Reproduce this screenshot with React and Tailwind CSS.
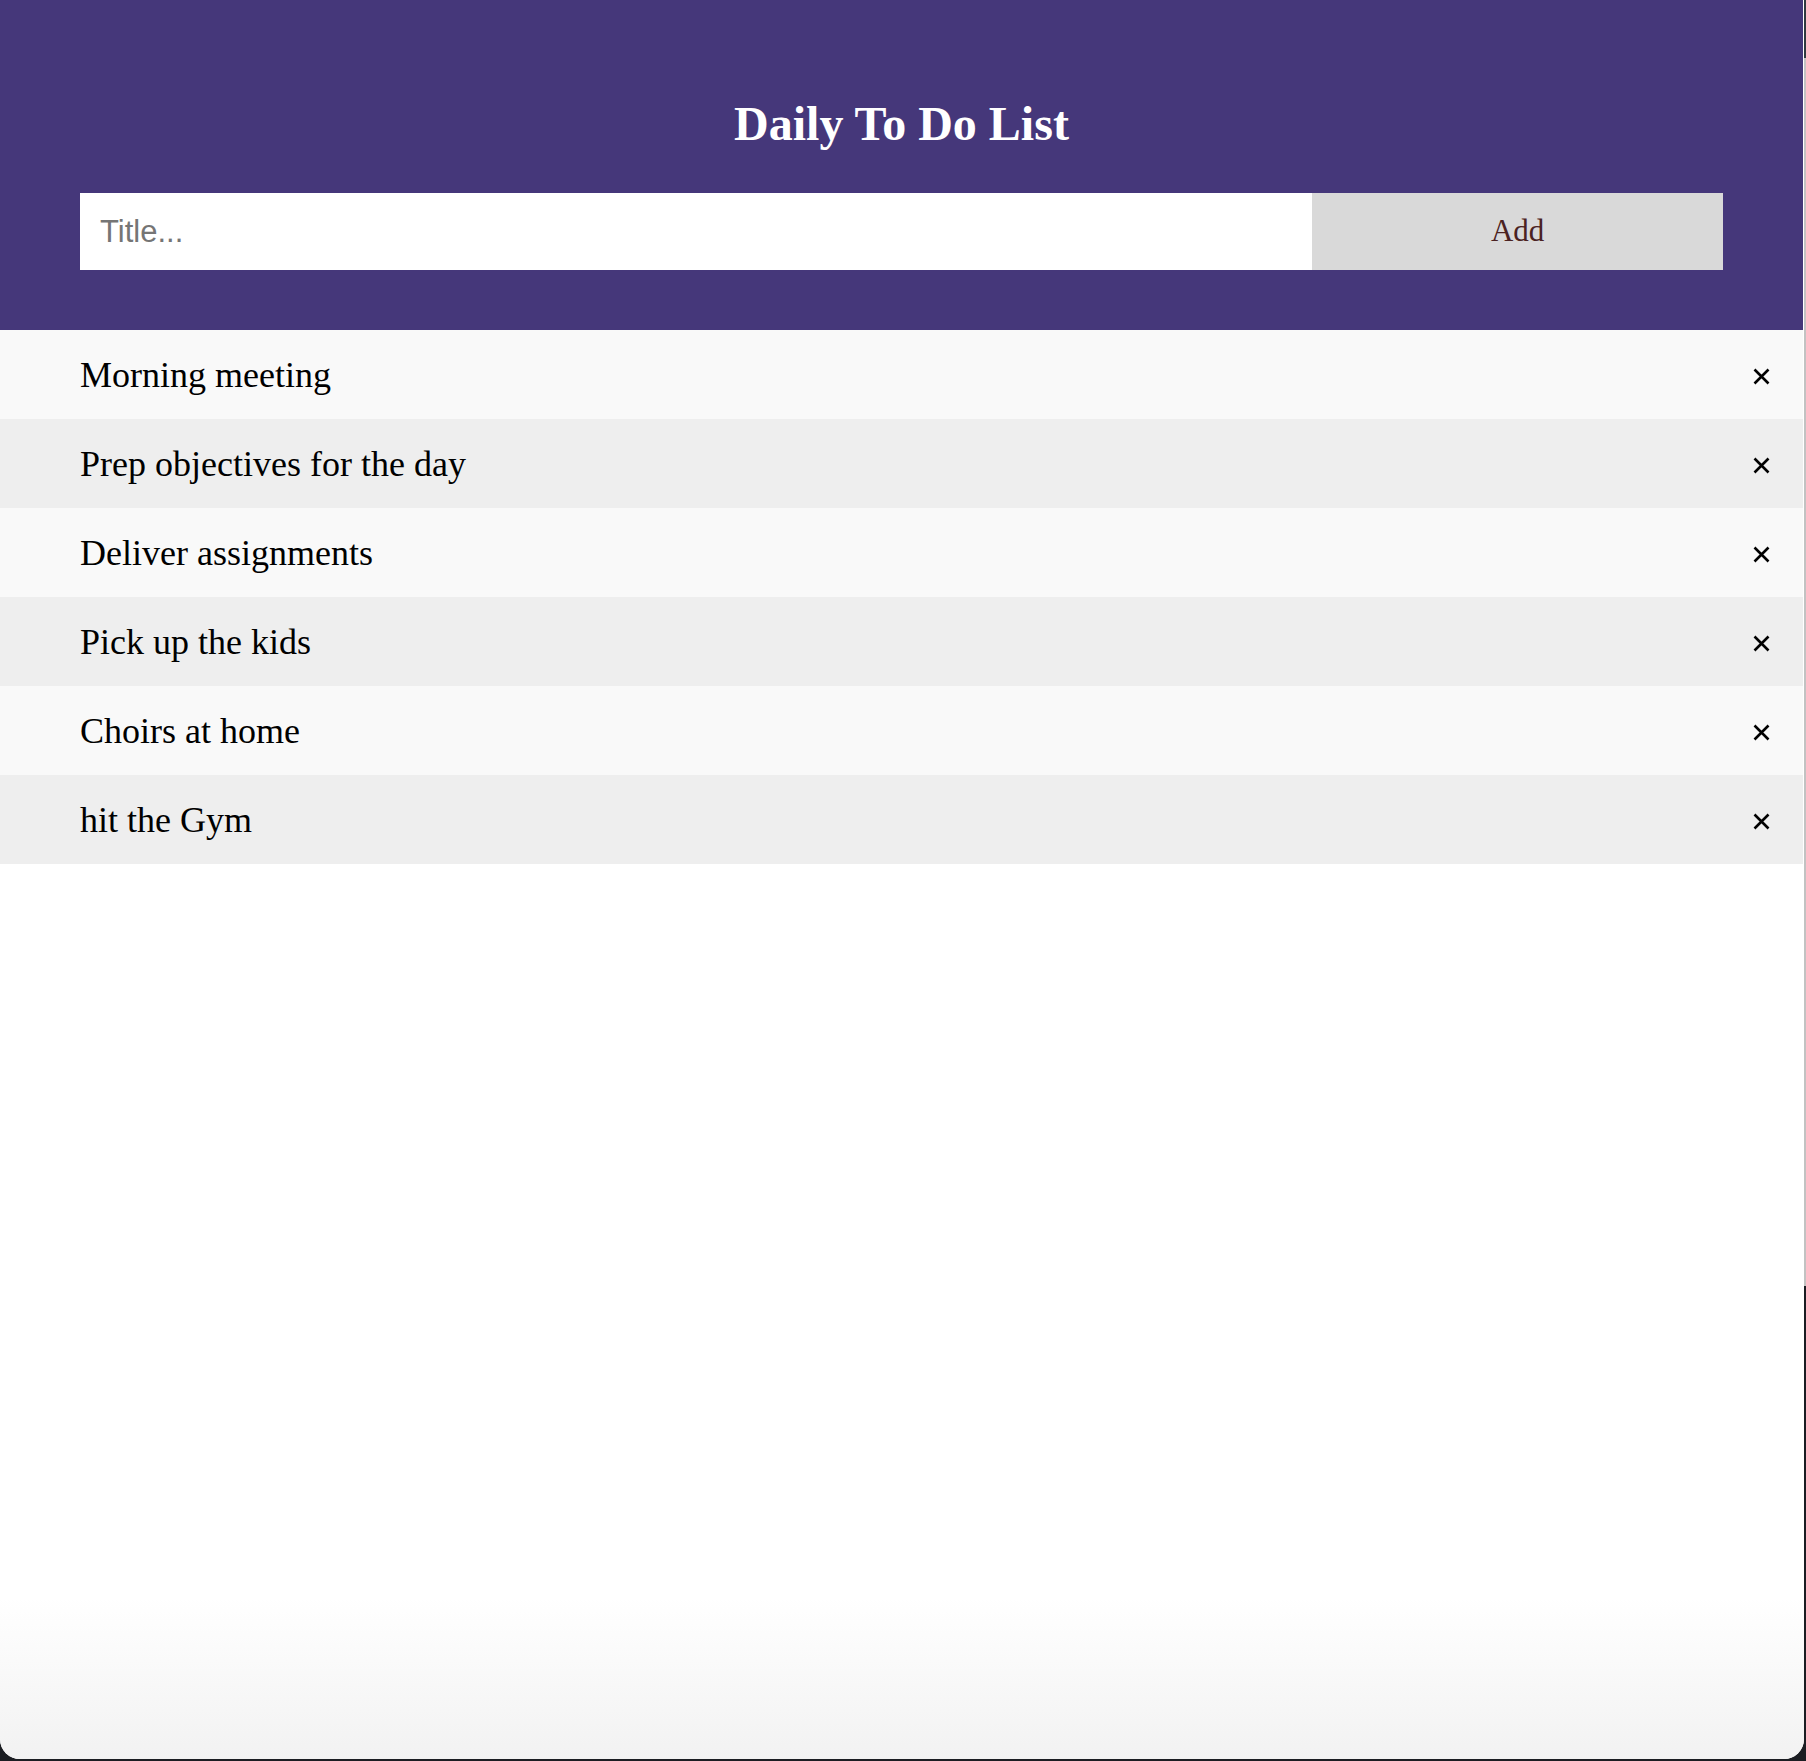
import React from "react";

const items = [
  "Morning meeting",
  "Prep objectives for the day",
  "Deliver assignments",
  "Pick up the kids",
  "Choirs at home",
  "hit the Gym",
];

function CloseIcon() {
  return (
    <svg width="17" height="17" viewBox="0 0 17 17" className="block mt-[3px]">
      <path d="M1.5 1.5 L15.5 15.5 M15.5 1.5 L1.5 15.5" stroke="#000" strokeWidth="2.6" strokeLinecap="butt" />
    </svg>
  );
}

export default function App() {
  return (
    <div className="w-[1806px] h-[1761px] bg-[#1b1d22] flex overflow-hidden">
      <div className="w-[1804px] h-[1759px] bg-white rounded-b-[20px] overflow-hidden flex flex-col relative">
        <div className="bg-[#45377a] pt-[96px] pb-[60px] px-[80px] w-[1803px]">
          <h1
            className="h-[55px] leading-[55px] text-[48px] font-bold text-white text-center mb-[42px]"
            style={{ fontFamily: '"Liberation Serif", "Times New Roman", serif' }}
          >
            Daily To Do List
          </h1>
          <div className="flex h-[77px]">
            <input
              type="text"
              placeholder="Title..."
              className="w-[75%] h-full bg-white px-[20px] text-[31px] text-black outline-none placeholder:text-[#757575]"
              style={{ fontFamily: '"Liberation Sans", Arial, sans-serif' }}
            />
            <span
              className="w-[25%] h-full bg-[#d9d9d9] flex items-center justify-center text-[31px] text-[#4b2222]"
              style={{ fontFamily: '"Liberation Serif", "Times New Roman", serif' }}
            >
              Add
            </span>
          </div>
        </div>
        <ul className="w-[1803px]" style={{ fontFamily: '"Liberation Serif", "Times New Roman", serif' }}>
          {items.map((t, i) => (
            <li
              key={t}
              className={
                "h-[89px] flex items-center justify-between pl-[80px] pr-[33px] text-[36px] text-black " +
                (i % 2 === 0 ? "bg-[#f9f9f9]" : "bg-[#eeeeee]")
              }
            >
              <span className="mt-[1px]">{t}</span>
              <CloseIcon />
            </li>
          ))}
        </ul>
        <div className="flex-1 bg-[linear-gradient(to_bottom,#ffffff_0%,#ffffff_82%,#f2f2f2_100%)]" />
      </div>
      <div className="w-[2px] h-[1761px] flex flex-col">
        <div className="h-[58px] bg-[#2f3a40]" />
        <div className="h-[1228px] bg-[#c2c2c2]" />
        <div className="flex-1 bg-[#1b1d22]" />
      </div>
    </div>
  );
}
